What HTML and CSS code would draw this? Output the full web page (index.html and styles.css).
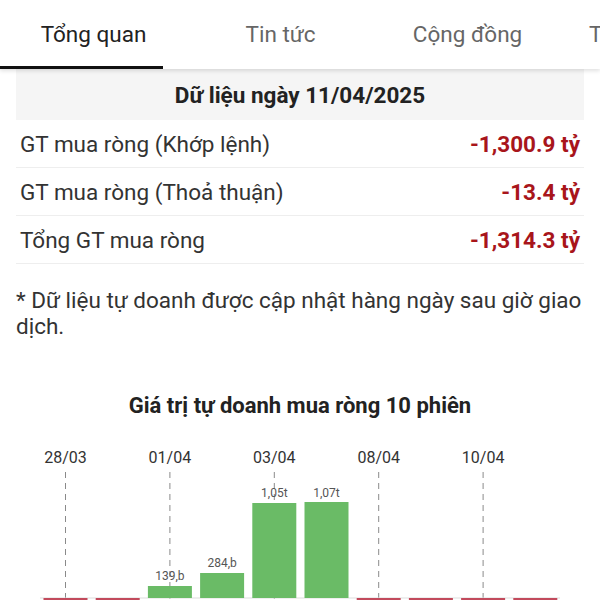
FILE: index.html
```html
<!DOCTYPE html>
<html lang="vi">
  <head>
    <meta charset="UTF-8" />
    <meta name="viewport" content="width=device-width, initial-scale=1.0" />
    <title>Tự doanh - Tổng quan</title>
    <link rel="stylesheet" href="styles.css">
  </head>
  <body>
    <nav class="tabs">
      <a class="tab active">Tổng quan</a>
      <a class="tab">Tin tức</a>
      <a class="tab">Cộng đồng</a>
      <a class="tab">Thông tin DN</a>
    </nav>

    <main class="content">
      <div class="date-head">Dữ liệu ngày 11/04/2025</div>
      <div class="row">
        <span>GT mua ròng (Khớp lệnh)</span>
        <span class="val">-1,300.9 tỷ</span>
      </div>
      <div class="row">
        <span>GT mua ròng (Thoả thuận)</span>
        <span class="val">-13.4 tỷ</span>
      </div>
      <div class="row">
        <span>Tổng GT mua ròng</span>
        <span class="val">-1,314.3 tỷ</span>
      </div>

      <p class="note">* Dữ liệu tự doanh được cập nhật hàng ngày sau giờ giao dịch.</p>

      <h3 class="chart-title">Giá trị tự doanh mua ròng 10 phiên</h3>

      <!-- chart uses page coordinates via the viewBox -->
      <svg class="chart" width="568" height="170" viewBox="16 430 568 170">
        <g class="dates">
          <text x="65.5" y="462">28/03</text>
          <text x="169.9" y="462">01/04</text>
          <text x="274.3" y="462">03/04</text>
          <text x="378.7" y="462">08/04</text>
          <text x="483.1" y="462">10/04</text>
        </g>
        <g class="grid">
          <line x1="65.5" y1="471" x2="65.5" y2="600" />
          <line x1="169.9" y1="471" x2="169.9" y2="600" />
          <line x1="274.3" y1="471" x2="274.3" y2="600" />
          <line x1="378.7" y1="471" x2="378.7" y2="600" />
          <line x1="483.1" y1="471" x2="483.1" y2="600" />
        </g>
        <g class="labels">
          <text x="169.9" y="579">139,b</text>
          <text x="222.1" y="566">284,b</text>
          <text x="274.3" y="496">1,05t</text>
          <text x="326.5" y="496">1,07t</text>
        </g>
        <line class="axis" x1="40" y1="597" x2="560" y2="597" />
        <g class="neg">
          <rect x="43.5" y="597" width="44" height="10" />
          <rect x="95.7" y="597" width="44" height="10" />
          <rect x="356.7" y="597" width="44" height="10" />
          <rect x="408.9" y="597" width="44" height="10" />
          <rect x="461.1" y="597" width="44" height="10" />
          <rect x="513.3" y="597" width="44" height="10" />
        </g>
        <g class="pos">
          <rect x="147.9" y="585" width="44" height="12" />
          <rect x="200.1" y="572" width="44" height="25" />
          <rect x="252.3" y="502" width="44" height="95" />
          <rect x="304.5" y="501" width="44" height="96" />
        </g>
      </svg>
    </main>
  </body>
</html>
```

FILE: styles.css
```css
body {
  margin: 0;
  padding: 0;
  font-family: Roboto, "Noto Sans", Arial, sans-serif;
  color: #333;
  background: #fff;
  overflow: hidden;
}
.tabs {
  display: flex;
  height: 69px;
  background: #fff;
  box-shadow: 0 2px 4px rgba(0, 0, 0, 0.12);
  overflow: hidden;
  white-space: nowrap;
  position: relative;
  z-index: 1;
}
.tab {
  flex: 0 0 187px;
  position: relative;
  text-align: center;
  line-height: 68px;
  font-size: 22.5px;
  color: #666;
}
.tab.active {
  color: #222;
}
.tab.active::after {
  content: "";
  position: absolute;
  left: 0;
  bottom: 0;
  width: 163px;
  height: 3px;
  background: #111;
}
.content {
  padding: 0 16px;
}
.date-head {
  height: 51px;
  line-height: 53px;
  background: #f5f5f5;
  text-align: center;
  font-size: 22.5px;
  font-weight: bold;
  color: #222;
}
.row {
  display: flex;
  justify-content: space-between;
  align-items: center;
  height: 47px;
  padding: 0 4px;
  border-bottom: 1px solid #eee;
  font-size: 22.5px;
  color: #333;
}
.val {
  font-weight: bold;
  color: #a8151b;
}
.note {
  margin: 23px 0 0;
  font-size: 22.5px;
  line-height: 26px;
  color: #333;
}
.chart-title {
  margin: 53px 0 0;
  font-size: 22px;
  line-height: 28px;
  font-weight: bold;
  text-align: center;
  color: #222;
}
.chart {
  display: block;
  margin-top: 11px;
}
.dates text {
  font-size: 16px;
  fill: #333;
  text-anchor: middle;
}
.labels text {
  font-size: 12px;
  fill: #555;
  text-anchor: middle;
}
.grid line {
  stroke: #8a8a8a;
  stroke-width: 1;
  stroke-dasharray: 6 5;
}
.axis {
  stroke: #ddd;
  stroke-width: 1;
}
.pos rect {
  fill: #6abb66;
}
.neg rect {
  fill: #c24a5c;
}
```
